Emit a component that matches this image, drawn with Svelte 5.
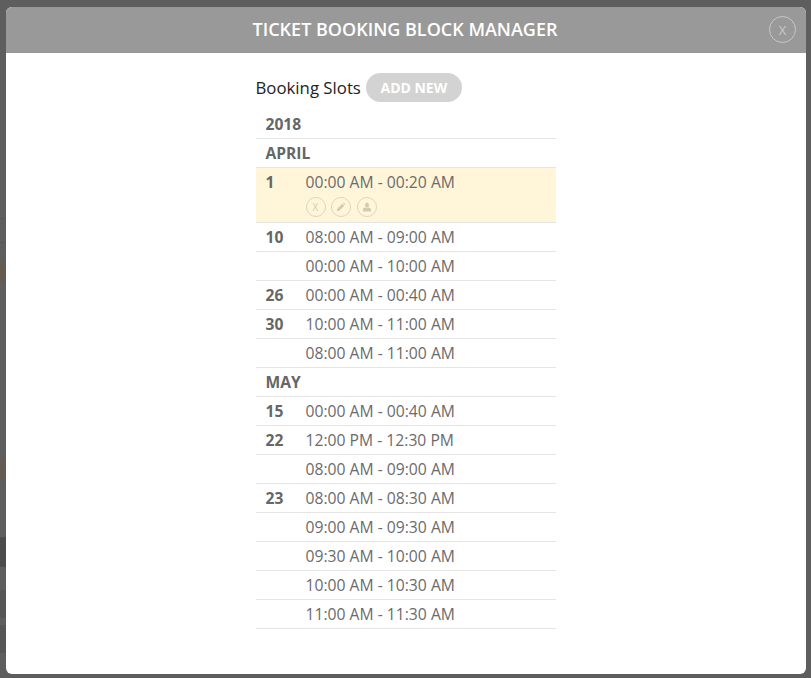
<script lang="ts">
	type Slot = { day?: string; time: string; active?: boolean };
	type Month = { name: string; slots: Slot[] };

	const months: Month[] = [
		{
			name: 'APRIL',
			slots: [
				{ day: '1', time: '00:00 AM - 00:20 AM', active: true },
				{ day: '10', time: '08:00 AM - 09:00 AM' },
				{ time: '00:00 AM - 10:00 AM' },
				{ day: '26', time: '00:00 AM - 00:40 AM' },
				{ day: '30', time: '10:00 AM - 11:00 AM' },
				{ time: '08:00 AM - 11:00 AM' }
			]
		},
		{
			name: 'MAY',
			slots: [
				{ day: '15', time: '00:00 AM - 00:40 AM' },
				{ day: '22', time: '12:00 PM - 12:30 PM' },
				{ time: '08:00 AM - 09:00 AM' },
				{ day: '23', time: '08:00 AM - 08:30 AM' },
				{ time: '09:00 AM - 09:30 AM' },
				{ time: '09:30 AM - 10:00 AM' },
				{ time: '10:00 AM - 10:30 AM' },
				{ time: '11:00 AM - 11:30 AM' }
			]
		}
	];
</script>

<div class="overlay">
	<div class="modal">
		<header class="modal-head">
			<h1>TICKET BOOKING BLOCK MANAGER</h1>
			<button class="close">X</button>
		</header>

		<div class="modal-body">
			<div class="slots">
				<div class="title-row">
					<h2>Booking Slots</h2>
					<button class="add">ADD NEW</button>
				</div>

				<div class="heading">2018</div>

				{#each months as month}
					<div class="heading">{month.name}</div>
					{#each month.slots as slot}
						<div class="slot" class:active={slot.active}>
							<div class="day">{slot.day ?? ''}</div>
							<div class="info">
								<div class="time">{slot.time}</div>
								{#if slot.active}
									<div class="actions">
										<span class="action">X</span>
										<span class="action">
											<svg viewBox="0 0 10 10" width="10" height="10">
												<path d="M0.8 9.200l.7-2.800 4.700-4.700 2.100 2.100-4.700 4.700zM6.900 1l.8-.6 1.900 1.900-.6.8z" fill="currentColor" />
											</svg>
										</span>
										<span class="action">
											<svg viewBox="0 0 10 10" width="10" height="10">
												<ellipse cx="5" cy="3" rx="2" ry="2.500" fill="currentColor" />
												<path d="M1 9.500V7.500c0-1.200 1.200-1.800 2.500-2 .9.600 2.100.6 3 0 1.300.2 2.500.8 2.500 2v2z" fill="currentColor" />
											</svg>
										</span>
									</div>
								{/if}
							</div>
						</div>
					{/each}
				{/each}
			</div>
		</div>
	</div>
</div>

<style>
	:global(body) {
		margin: 0;
	}

	/* the dimmed page behind the modal only shows as a strip on the left */
	.overlay {
		box-sizing: border-box;
		width: 811px;
		height: 678px;
		padding: 7px 5px 4px 6px;
		background:
			linear-gradient(
				#5e5e5e 218px,
				#555 218px 219px,
				#5e5e5e 219px 242px,
				#555 242px 243px,
				#5e5e5e 243px 262px,
				#645c52 262px 283px,
				#5e5e5e 283px 458px,
				#645c52 458px 482px,
				#5e5e5e 482px 537px,
				#4c4c4c 537px 567px,
				#5e5e5e 567px 590px,
				#565656 590px 618px,
				#5e5e5e 618px 625px,
				#565656 625px 653px,
				#5e5e5e 653px
			)
			left / 6px 100% no-repeat,
			#5e5e5e;
		font-family: 'Open Sans', sans-serif;
	}

	.modal {
		display: flex;
		flex-direction: column;
		height: 100%;
		border-radius: 6px;
		overflow: hidden;
		background: #fff;
	}

	.modal-head {
		position: relative;
		display: flex;
		align-items: center;
		justify-content: center;
		flex: none;
		box-sizing: border-box;
		height: 46px;
		padding: 0 2px 2px 0;
		background: #999;
	}

	h1 {
		margin: 0;
		font-size: 18px;
		font-weight: 600;
		color: #fff;
	}

	.close {
		position: absolute;
		top: 9px;
		right: 10px;
		box-sizing: border-box;
		width: 27px;
		height: 27px;
		padding: 0;
		border: 1px solid #c8c8c8;
		border-radius: 50%;
		background: transparent;
		color: #c8c8c8;
		font-family: inherit;
		font-size: 13px;
	}

	.modal-body {
		flex: 1;
		display: flex;
		justify-content: center;
		padding-top: 20px;
	}

	.slots {
		width: 300px;
		margin-left: -1px;
	}

	.title-row {
		display: flex;
		align-items: center;
		gap: 5px;
		height: 29px;
		margin-bottom: 8px;
	}

	h2 {
		margin: 0;
		font-size: 16.800px;
		font-weight: 400;
		color: #222;
	}

	.add {
		width: 96px;
		height: 29px;
		padding: 0;
		border: 0;
		border-radius: 15px;
		background: #d3d3d3;
		color: #fff;
		font-family: inherit;
		font-size: 14px;
		font-weight: 700;
	}

	.heading {
		box-sizing: border-box;
		height: 29px;
		padding: 0 10px;
		border-bottom: 1px solid #e5e5e5;
		font-size: 15.600px;
		font-weight: 700;
		line-height: 28px;
		color: #666;
	}

	.slot {
		box-sizing: border-box;
		display: flex;
		min-height: 29px;
		padding: 0 10px;
		border-bottom: 1px solid #e5e5e5;
		font-size: 15.700px;
		line-height: 28px;
		color: #6b6b6b;
	}

	.slot.active {
		height: 55px;
		background: #fff6da;
	}

	.day {
		width: 40px;
		flex: none;
		font-size: 15.600px;
		font-weight: 700;
		color: #666;
	}

	.actions {
		display: flex;
		gap: 5.500px;
		margin-top: 1px;
	}

	.action {
		box-sizing: border-box;
		display: flex;
		align-items: center;
		justify-content: center;
		width: 20px;
		height: 20px;
		border: 1px solid #ddd5bb;
		border-radius: 50%;
		color: #d3cbb0;
		font-size: 10px;
		line-height: 1;
	}
</style>
